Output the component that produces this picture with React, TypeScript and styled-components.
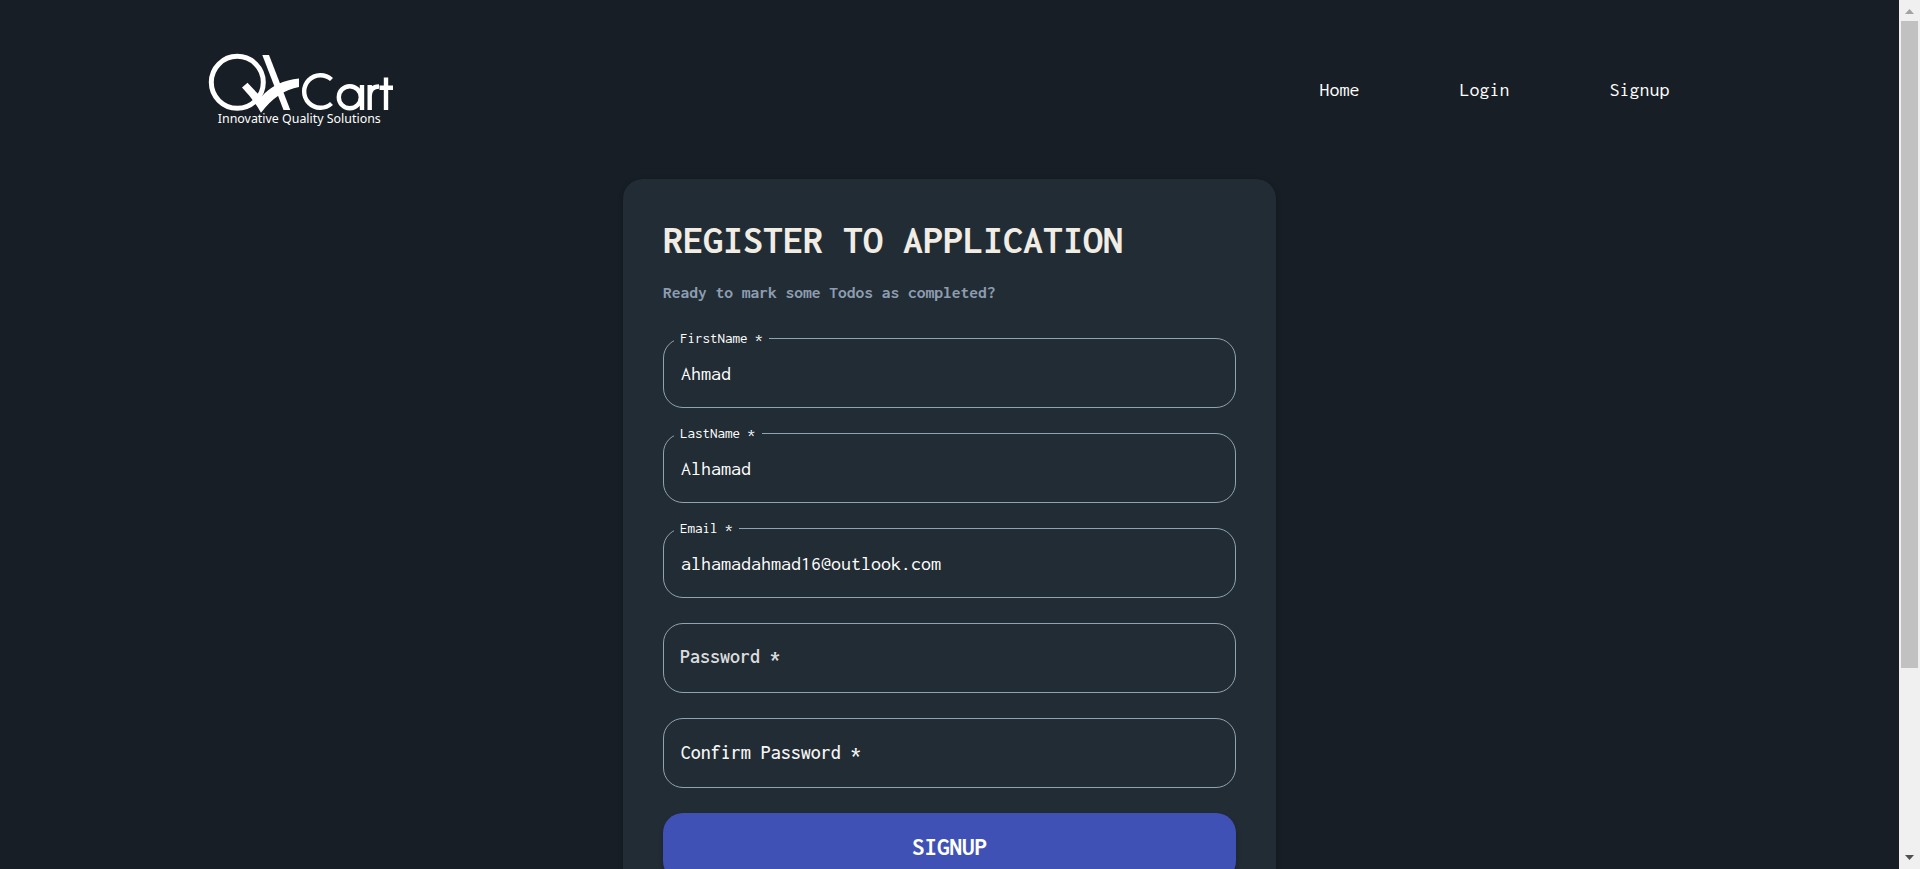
import React from 'react';
import styled, { createGlobalStyle } from 'styled-components';

const mono = `Inconsolata, 'DejaVu Sans Mono', 'Liberation Mono', monospace`;

const GlobalStyle = createGlobalStyle`
  *, *::before, *::after { box-sizing: border-box; }
  body { margin: 0; background: #171e25; overflow: hidden; }
`;

const Window = styled.div`
  display: flex;
  height: 869px;
  overflow: hidden;
  background: #171e25;
  color: #fff;
  font: 20px/24px ${mono};
`;

const Page = styled.div`
  flex: 1;
  display: flex;
  flex-direction: column;
  align-items: center;
  overflow: hidden;
`;

const Header = styled.header`
  width: 100%;
  height: 179px;
  flex: none;
  display: flex;
  justify-content: space-between;
  align-items: center;
  padding: 0 229.5px 0 207px;
`;

const Nav = styled.nav`
  display: flex;
  gap: 100px;
`;

const NavLink = styled.a`
  color: #fff;
  text-decoration: none;
`;

const Card = styled.main`
  width: 653px;
  flex: none;
  padding: 40px;
  border-radius: 20px;
  background: #222c35;
  box-shadow: 0 2px 4px -1px rgba(0, 0, 0, 0.2), 0 1px 6px rgba(0, 0, 0, 0.1);
`;

const Title = styled.h1`
  margin: 0;
  color: #f1ede4;
  font-size: 40px;
  line-height: 43px;
  font-weight: 700;
`;

const Subtitle = styled.p`
  margin: 18px 0 0;
  color: #8d9db0;
  font-size: 17.5px;
  line-height: 25px;
  font-weight: 700;
`;

const Form = styled.form`
  display: flex;
  flex-direction: column;
  gap: 25px;
  padding-top: 33px;
`;

const Field = styled.fieldset`
  height: 70px;
  min-width: 0;
  margin: 0;
  padding: 0 17px;
  border: 1px solid #91a3b0;
  border-radius: 20px;
`;

const FilledField = styled(Field)`
  height: 76px;
  margin-top: -6px;
  padding: 0 10px;
`;

const Legend = styled.legend`
  height: 13px;
  padding: 0 6.5px 0 6px;
  font-size: 15px;
  line-height: 13px;
  white-space: pre;
`;

const Value = styled.div`
  padding: 17px 7px 0;
`;

const Placeholder = styled.div<{ $settling?: boolean }>`
  padding-top: ${(p) => (p.$settling ? 21 : 22)}px;
  margin-left: ${(p) => (p.$settling ? -1 : -0.3)}px;
  color: ${(p) => (p.$settling ? '#dadcde' : '#f6f6f6')};
  font-weight: ${(p) => (p.$settling ? 600 : 500)};
`;

const Submit = styled.button`
  height: 68px;
  padding: 0;
  border: 0;
  border-radius: 20px;
  background: #3f51b5;
  color: #fff;
  font: 700 25px/28px ${mono};
  box-shadow: 0 3px 5px rgba(0, 0, 0, 0.2);
`;

const Scrollbar = styled.aside`
  width: 21px;
  flex: none;
  display: flex;
  flex-direction: column;
  align-items: center;
  background: #f0f0f0;
  padding: 9px 2px;
`;

const Thumb = styled.div`
  width: 17px;
  height: 647px;
  margin: 7px 0 auto;
  background: #c1c1c1;
`;

const Arrow = styled.svg`
  display: block;
  width: 9px;
  height: 5px;
  flex: none;
`;

const Logo = () => (
  <svg width="190" height="79" viewBox="0 0 190 79" fill="none" stroke="#fff">
    <circle cx="30.3" cy="32.3" r="26" strokeWidth="5" />
    <path fill="#fff" stroke="none" d="M55.300 5H62L83.300 60H76.500Z" />
    <path fill="#fff" stroke="none" d="M35 37.500L40.500 32.800L54 47Q69 30.500 92 28.500V37Q71 40.500 54 62.700Q47 50 35 37.500Z" />
    <path d="M124.500 29.500A16.300 16.300 0 1 0 124.500 53.500" strokeWidth="4.400" />
    <ellipse cx="142.800" cy="47.200" rx="11" ry="11" strokeWidth="4.400" />
    <path d="M155 35V60M162.700 60V35M162.700 46Q163 36.500 172 36.500M179 27.500V60M172.500 37.700H186" strokeWidth="4.400" />
    <text x="10.800" y="73.300" fill="#fff" stroke="none" fontFamily="'Noto Sans', sans-serif" fontSize="12.800" textLength="163" lengthAdjust="spacingAndGlyphs">Innovative Quality Solutions</text>
  </svg>
);

const filled = [
  { label: 'FirstName', value: 'Ahmad' },
  { label: 'LastName', value: 'Alhamad' },
  { label: 'Email', value: 'alhamadahmad16@outlook.com' },
];

export default function App() {
  return (
    <Window>
      <GlobalStyle />
      <Page>
        <Header>
          <Logo />
          <Nav>
            <NavLink>Home</NavLink>
            <NavLink>Login</NavLink>
            <NavLink>Signup</NavLink>
          </Nav>
        </Header>
        <Card>
          <Title>REGISTER TO APPLICATION</Title>
          <Subtitle>Ready to mark some Todos as completed?</Subtitle>
          <Form>
            {filled.map((f) => (
              <FilledField key={f.label}>
                <Legend>{f.label} *</Legend>
                <Value>{f.value}</Value>
              </FilledField>
            ))}
            <Field><Placeholder $settling>Password *</Placeholder></Field>
            <Field><Placeholder>Confirm Password *</Placeholder></Field>
            <Submit type="button">SIGNUP</Submit>
          </Form>
        </Card>
      </Page>
      <Scrollbar>
        <Arrow viewBox="0 0 9 5"><path d="M0 5L4.500 0L9 5Z" fill="#a3a3a3" /></Arrow>
        <Thumb />
        <Arrow viewBox="0 0 9 5"><path d="M0 0H9L4.500 5Z" fill="#505050" /></Arrow>
      </Scrollbar>
    </Window>
  );
}
